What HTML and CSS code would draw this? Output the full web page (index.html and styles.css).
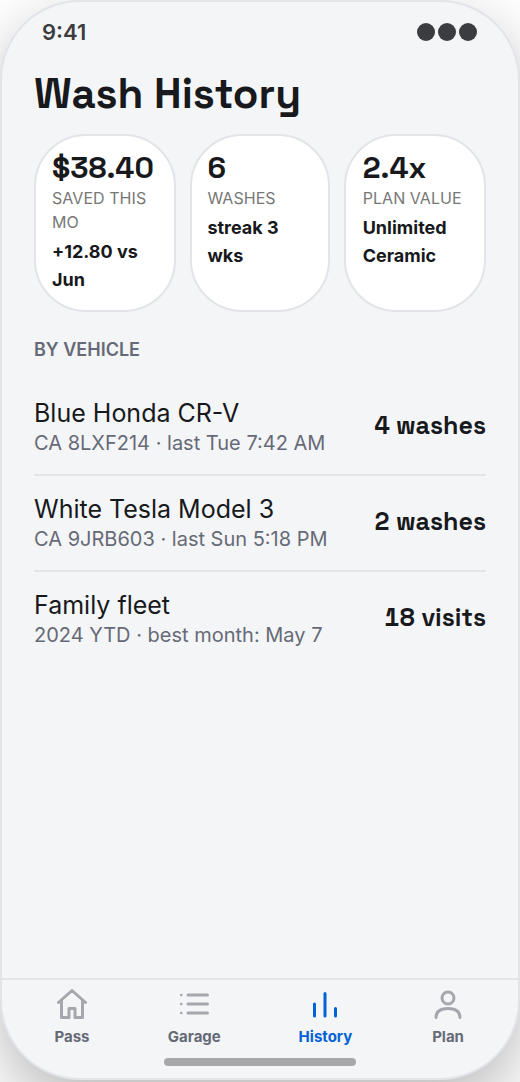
FILE: index.html
```html
<!DOCTYPE html>
<html lang="en">
<head>
<meta charset="utf-8">
<title>Wash History</title>
<link rel="stylesheet" href="styles.css">
</head>
<body>
<main class="phone">
  <header class="status">
    <span class="time">9:41</span>
    <span class="dots"><i></i><i></i><i></i></span>
  </header>
  <section class="content">
    <h1 class="title">Wash History</h1>
    <div class="stats">
      <article class="stat">
        <div class="value">$38.40</div>
        <div class="label">SAVED THIS MO</div>
        <div class="note">+12.80 vs Jun</div>
      </article>
      <article class="stat">
        <div class="value">6</div>
        <div class="label">WASHES</div>
        <div class="note">streak 3 wks</div>
      </article>
      <article class="stat">
        <div class="value">2.4x</div>
        <div class="label">PLAN VALUE</div>
        <div class="note">Unlimited Ceramic</div>
      </article>
    </div>
    <h2 class="section">BY VEHICLE</h2>
    <ul class="vehicles">
      <li class="vehicle">
        <div><div class="name">Blue Honda CR-V</div><div class="meta">CA 8LXF214 · last Tue 7:42 AM</div></div>
        <strong class="count">4 washes</strong>
      </li>
      <li class="vehicle">
        <div><div class="name">White Tesla Model 3</div><div class="meta">CA 9JRB603 · last Sun 5:18 PM</div></div>
        <strong class="count">2 washes</strong>
      </li>
      <li class="vehicle">
        <div><div class="name">Family fleet</div><div class="meta">2024 YTD · best month: May 7</div></div>
        <strong class="count">18 visits</strong>
      </li>
    </ul>
  </section>
  <nav class="tabs">
    <a class="tab"><svg class="icon" viewBox="0 0 24 24"><path d="M3 11 12 3l9 8M5 9.500V21h5v-6h4v6h5V9.500"/></svg>Pass</a>
    <a class="tab"><svg class="icon" viewBox="0 0 24 24"><path d="M8 6h13M8 12h13M8 18h13"/><path class="bullets" d="M3.500 6h.01M3.500 12h.01M3.500 18h.01"/></svg>Garage</a>
    <a class="tab active"><svg class="icon" viewBox="0 0 24 24"><path d="M5 12v8M12 5v15M19 15v5"/></svg>History</a>
    <a class="tab"><svg class="icon" viewBox="0 0 24 24"><circle cx="12" cy="8" r="4"/><path d="M4 21c0-4 3-6 8-6s8 2 8 6"/></svg>Plan</a>
  </nav>
  <div class="home"></div>
</main>
</body>
</html>
```
FILE: styles.css
```css
* { box-sizing: border-box; }
body { margin: 0; height: 1082px; overflow: hidden; background: #fff; font-family: Inter, sans-serif; color: #17191c; }
.phone { height: 1080px; display: flex; flex-direction: column; background: #f4f5f7; border: 2px solid #e3e4e8; border-radius: 80px; overflow: hidden; box-shadow: 0 24px 64px rgba(0, 0, 0, .28); }
.status { height: 60px; padding: 0 41.5px 0 40px; display: flex; align-items: center; justify-content: space-between; opacity: .84; }
.time { font-size: 22px; font-weight: 600; }
.dots { display: flex; gap: 3px; }
.dots i { width: 18px; height: 18px; border-radius: 50%; background: #17191c; }
.content { flex: 1; padding: 8px 32px 0; }
.title { margin: 0; font-family: "Space Grotesk", Inter, sans-serif; font-size: 42px; line-height: 48px; font-weight: 700; white-space: nowrap; }
.stats { display: grid; grid-template-columns: 142px 140px 142px; gap: 14px; margin-top: 16px; }
.stat { height: 178px; padding: 16px 12px 0 16px; background: #fff; border: 2px solid #e3e4e8; border-radius: 52px; }
.stat:nth-child(2) { padding-left: 15.400px; }
.stat:nth-child(3) { padding-left: 16.700px; }
.value { font-family: "Space Grotesk", Inter, sans-serif; font-size: 30px; line-height: 32px; font-weight: 700; }
.label { font-size: 16px; line-height: 24px; margin-top: 2px; letter-spacing: .05px; color: #777; }
.note { font-size: 18px; line-height: 28px; font-weight: 700; margin-top: 4px; }
.section { margin: 24px 0 0; font-size: 18px; line-height: 28px; font-weight: 600; color: #666a76; }
.vehicles { list-style: none; margin: 16px 0 0; padding: 0; }
.vehicle { height: 96px; display: flex; align-items: center; justify-content: space-between; border-bottom: 2px solid #e3e4e7; }
.vehicle:last-child { border-bottom: 0; height: 94px; }
.name { font-size: 25px; line-height: 32px; white-space: nowrap; }
.meta { font-size: 20px; line-height: 28px; color: #666a76; white-space: nowrap; }
.count { font-family: "Space Grotesk", Inter, sans-serif; font-size: 25px; line-height: 32px; margin-bottom: 4px; font-variant-numeric: tabular-nums; white-space: nowrap; }
.tabs { height: 78px; border-top: 2px solid #e3e4e7; display: flex; justify-content: space-around; padding: 6px 13px 0; }
.tab { display: flex; flex-direction: column; align-items: center; font-size: 15px; line-height: 24px; font-weight: 700; color: #666a76; gap: 3px; }
.icon { width: 36px; height: 36px; fill: none; stroke: #a6a7ae; stroke-width: 2; stroke-linecap: round; stroke-linejoin: round; }
.bullets { stroke-width: 1.8; }
.active { color: #0062d6; }
.active .icon { stroke: #0062d6; }
.home { width: 192px; height: 8px; margin: 2px auto 12px; border-radius: 4px; background: #a6a7a9; }
```
